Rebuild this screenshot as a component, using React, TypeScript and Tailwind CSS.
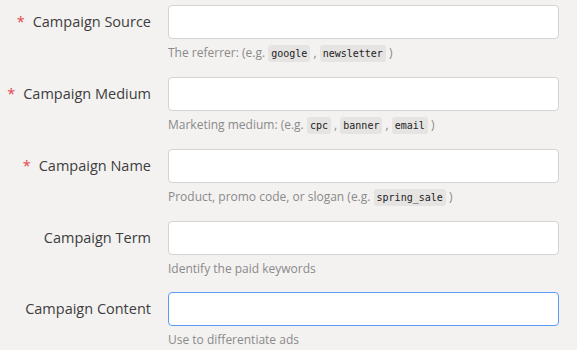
const fields = [
  { label: "Campaign Source", required: true, help: ["The referrer: (e.g. ", { code: "google" }, " , ", { code: "newsletter" }, " )"] },
  { label: "Campaign Medium", required: true, help: ["Marketing medium: (e.g. ", { code: "cpc" }, " , ", { code: "banner" }, " , ", { code: "email" }, " )"] },
  { label: "Campaign Name", required: true, help: ["Product, promo code, or slogan (e.g. ", { code: "spring_sale" }, " )"] },
  { label: "Campaign Term", required: false, help: ["Identify the paid keywords"] },
  { label: "Campaign Content", required: false, focused: true, help: ["Use to differentiate ads"] },
];

type Part = string | { code: string };

function Help({ parts }: { parts: Part[] }) {
  return (
    <div className="mt-[6px] text-[12px] leading-[16px] text-[#8a8a8a] whitespace-pre">
      {parts.map((p, i) =>
        typeof p === "string" ? (
          <span key={i}>{p}</span>
        ) : (
          <code
            key={i}
            className="rounded-[3px] bg-[#e5e4e2] px-[3px] py-[3px] text-[10px] text-[#222] font-['DejaVu_Sans_Mono',monospace]"
          >
            {p.code}
          </code>
        )
      )}
    </div>
  );
}

export default function App() {
  return (
    <div className="min-h-[350px] w-[577px] bg-[#f3f2f1] pt-[5px] font-['Open_Sans',sans-serif]">
      <div className="flex flex-col gap-[15px]">
        {fields.map((f) => (
          <div key={f.label} className="flex gap-[17px]">
            <div className="flex h-[34px] w-[151px] items-center justify-end text-[14.5px] font-medium text-[#3d3d3d]">
              {f.required && <span className="mr-[8px] text-[#e0474c]">*</span>}
              {f.label}
            </div>
            <div className="w-[391px]">
              <input
                className={`block h-[34px] w-full rounded-[4px] border bg-white px-2 outline-none ${
                  f.focused ? "border-[#5b9bf8]" : "border-[#d4d3d1]"
                }`}
              />
              <Help parts={f.help as Part[]} />
            </div>
          </div>
        ))}
      </div>
    </div>
  );
}
